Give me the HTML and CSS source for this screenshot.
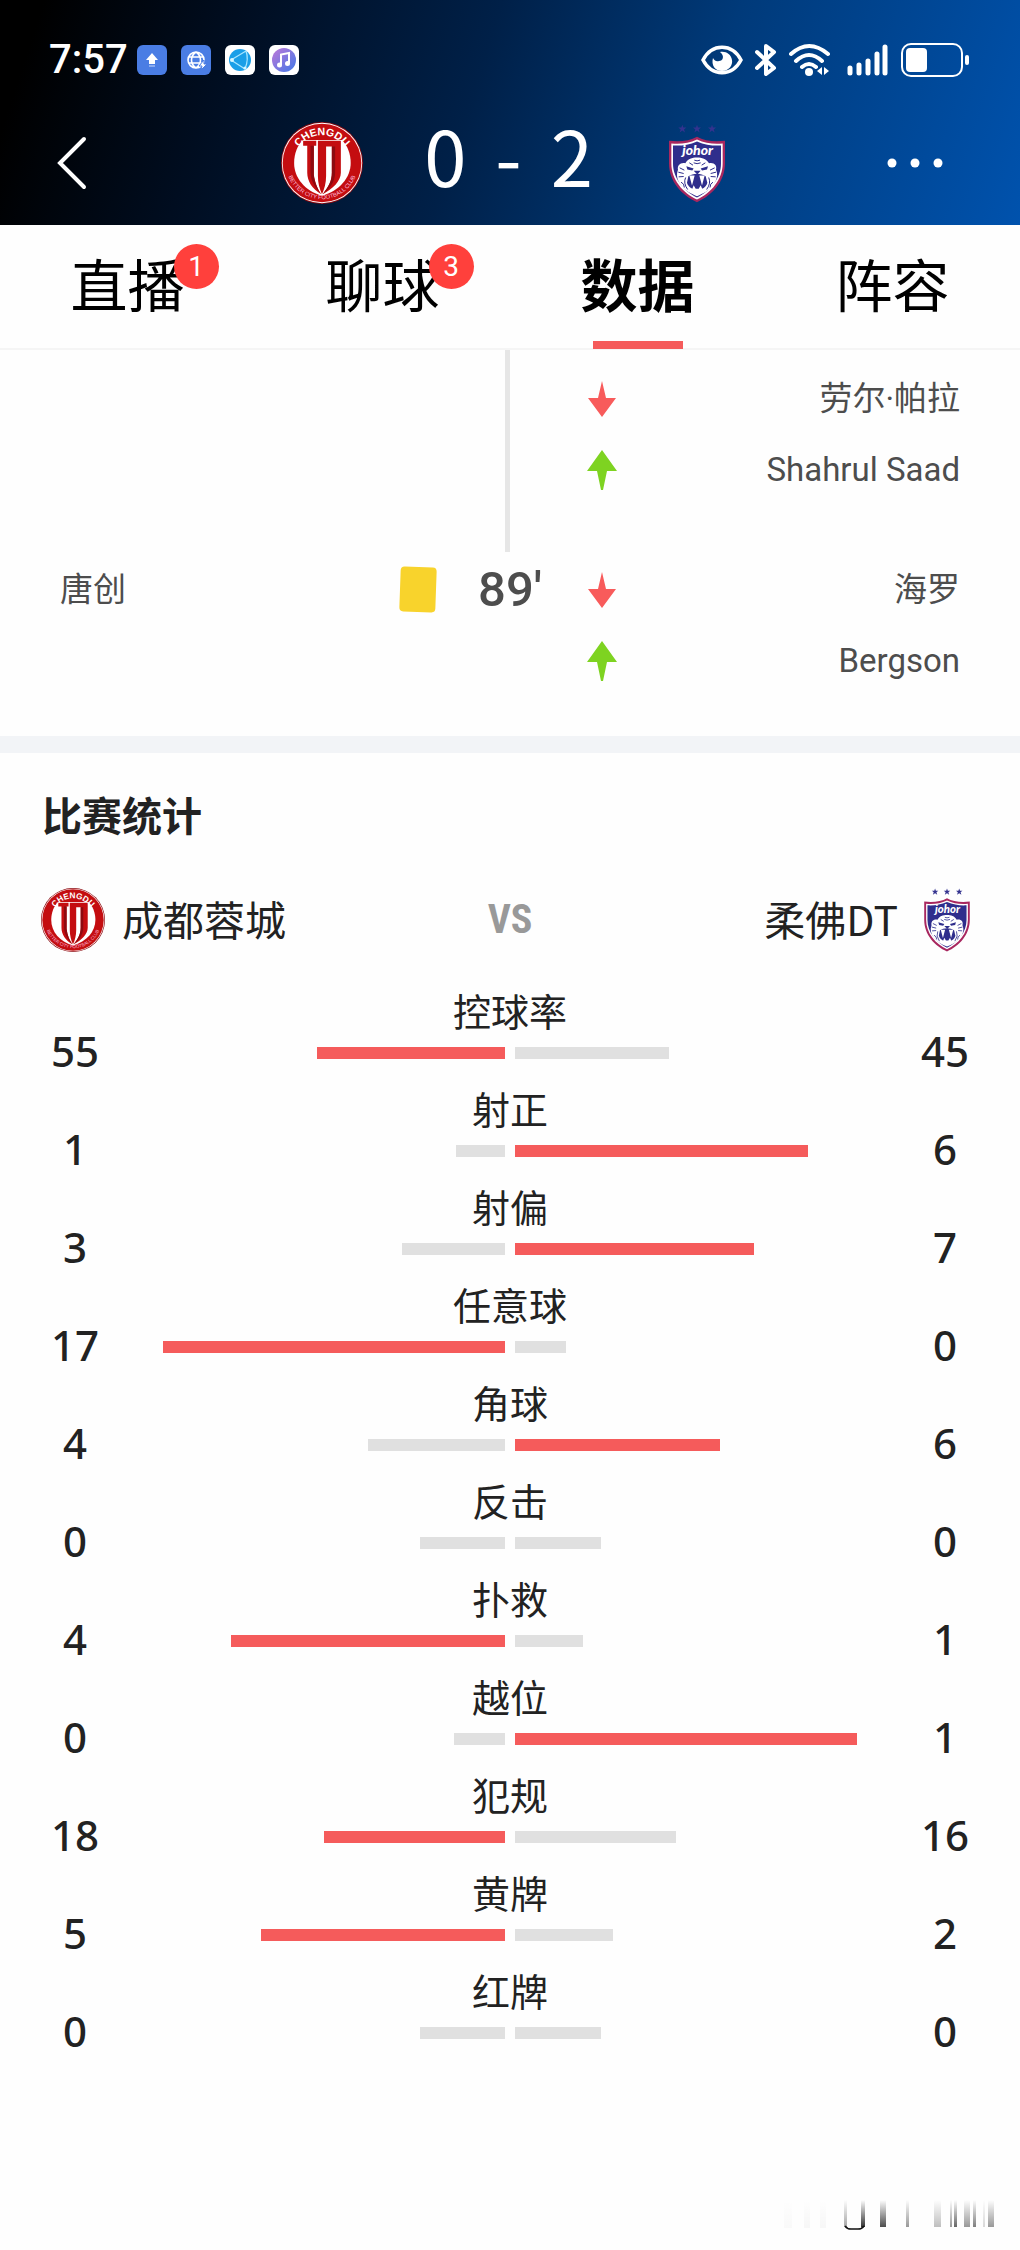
FILE: index.html
```html
<!DOCTYPE html>
<html lang="zh-CN">
<head>
    <meta charset="UTF-8">
    <meta name="viewport" content="width=device-width, initial-scale=1.0">
    <title>比赛数据</title>
    <link rel="stylesheet" href="styles.css">
</head>
<body>
    <!-- 队徽 -->
    <svg class="sprite" aria-hidden="true">
        <symbol id="crest-chengdu" viewBox="0 0 100 100">
            <circle cx="50" cy="50" r="50" fill="#8d0a10"/>
            <circle cx="50" cy="50" r="49" fill="#fff"/>
            <circle cx="50" cy="50" r="48" fill="#c40d10"/>
            <path d="M27 22H74C81 28 85 39 85 50C85 68 71 84 50 90C29 84 16 68 16 50C16 39 20 28 27 22Z" fill="#fff"/>
            <path d="M27 23H43V29H40V64C41 74 45 82 49 88C38 82 32 72 32 62V29H27Z" fill="#c40d10"/>
            <path d="M36 29H40V64C41 74 45 82 49 88C41 80 36 70 36 62Z" fill="#8d0a10"/>
            <path d="M45 23H73V62C73 72 63 82 51 88C58 79 62 72 62 62V30H55V66C55 74 53 82 50 88C47 82 45 74 45 66Z" fill="#c40d10"/>
            <path d="M62 30H66V62C66 73 59 82 51 88C58 79 62 72 62 62Z" fill="#8d0a10"/>
            <path id="arc-top" d="M16 50A34 34 0 0 1 84 50" fill="none"/>
            <path id="arc-bottom" d="M6 50A44 44 0 0 0 94 50" fill="none"/>
            <text class="crest-name"><textPath href="#arc-top" startOffset="50%" text-anchor="middle">CHENGDU</textPath></text>
            <text class="crest-motto"><textPath href="#arc-bottom" startOffset="50%" text-anchor="middle">BETTER CITY FOOTBALL CLUB</textPath></text>
        </symbol>
        <symbol id="crest-johor" viewBox="0 0 180 236">
            <g class="crest-stars">
                <path id="star" d="M46 2L49 10L58 10L51 16L54 25L46 19L38 25L41 16L34 10L43 10Z"/>
                <use href="#star" x="44"/>
                <use href="#star" x="89"/>
            </g>
            <path d="M90 38C112 51 142 53 174 50V118C174 172 135 214 90 234C45 214 6 172 6 118V50C38 53 68 51 90 38Z" fill="#a8275f"/>
            <path d="M90 46C114 58 140 60 167 58V118C167 166 132 207 90 226C48 207 13 166 13 118V58C40 60 66 58 90 46Z" fill="#fff"/>
            <path d="M90 52C114 63 138 65 162 64V118C162 162 130 201 90 220C50 201 18 162 18 118V64C42 65 66 63 90 52Z" fill="#2f2e8c"/>
            <text class="crest-johor-name" x="92" y="93" text-anchor="middle">johor</text>
            <path d="M55 117C62 104 75 100 90 100C105 100 118 104 126 117C142 114 151 124 147 137C154 152 150 169 138 184C127 199 109 208 90 216C71 208 53 199 42 184C30 169 27 152 33 137C30 124 40 114 55 117Z" fill="#fff"/>
            <path d="M64 156C78 146 102 146 116 156L121 176C114 204 68 204 60 176Z" fill="#2f2e8c"/>
            <path d="M67 154L75 184L83 154ZM97 154L105 184L113 154ZM74 199L80 183L86 194H95L101 183L108 199C98 205 84 205 74 199Z" fill="#fff"/>
            <path d="M80 140H101L91 151ZM58 126L80 133L76 139L61 136ZM123 126L101 133L105 139L120 136Z" fill="#2f2e8c"/>
            <path d="M82 108Q90 112 99 108M80 116Q90 121 101 116M67 116L78 123M115 116L104 123M38 131L52 138M34 144L50 148M35 158L50 157M143 131L129 138M147 144L131 148M146 158L131 157M42 174Q52 178 52 190M138 174Q129 178 129 190M56 160Q48 176 62 196M125 160Q133 176 119 196" fill="none" stroke="#2f2e8c" stroke-width="3"/>
        </symbol>
        <symbol id="arrow-down" viewBox="0 0 30 40">
            <path d="M15 2L19 19H29L15 38L1 19H11Z"/>
        </symbol>
        <symbol id="arrow-up" viewBox="0 0 30 40">
            <path d="M15 0L30 21H20L16 40H14L10 21H0Z"/>
        </symbol>
    </svg>

    <header class="header">
        <!-- 状态栏 -->
        <div class="status-bar">
            <span class="clock">7:57</span>
            <div class="status-apps">
                <svg width="30" height="30" viewBox="0 0 30 30">
                    <rect width="30" height="30" rx="6" fill="#4a7de4"/>
                    <path d="M15 8L21 15H18V19H12V15H9Z" fill="#fff"/>
                    <path d="M12 21H18" stroke="#c9dafc" stroke-width="1"/>
                </svg>
                <svg width="30" height="30" viewBox="0 0 30 30">
                    <rect width="30" height="30" rx="6" fill="#4a7de4"/>
                    <path d="M15 7A8 8 0 1 0 15 23A8 8 0 1 0 15 7M15 7C9 11 9 19 15 23C21 19 21 11 15 7M8 12H22M8 18H22" fill="none" stroke="#fff" stroke-width="1.6"/>
                    <path d="M23 15L18 21H21L20 25L26 19H23Z" fill="#fff" stroke="#4a7de4"/>
                </svg>
                <svg width="30" height="30" viewBox="0 0 30 30">
                    <rect width="30" height="30" rx="6" fill="#fff"/>
                    <circle cx="15" cy="15" r="11" fill="#1a9fe8"/>
                    <path d="M6 15L21 6M6 15L20 24M21 6Q24 14 20 24" fill="none" stroke="#a8e6ff" stroke-width="1.3"/>
                    <circle cx="7" cy="15" r="2" fill="#d5f5ff"/>
                    <circle cx="20" cy="23" r="1.6" fill="#d5f5ff"/>
                </svg>
                <svg width="30" height="30" viewBox="0 0 30 30">
                    <defs>
                        <linearGradient id="music" x1="0" y1="0" x2="1" y2="1">
                            <stop offset="0" stop-color="#c078d8"/>
                            <stop offset="1" stop-color="#3f78e8"/>
                        </linearGradient>
                    </defs>
                    <rect width="30" height="30" rx="6" fill="#fff"/>
                    <circle cx="15" cy="15" r="12" fill="url(#music)"/>
                    <path d="M12 20V9.500L20 8V18" fill="none" stroke="#fff" stroke-width="2"/>
                    <circle cx="10.500" cy="20" r="2.500" fill="#fff"/>
                    <circle cx="18.500" cy="18.500" r="2.500" fill="#fff"/>
                </svg>
            </div>
            <div class="status-icons">
                <svg width="42" height="34" viewBox="0 0 42 34">
                    <path d="M2 17C11 0 31 0 40 17C31 34 11 34 2 17Z" fill="none" stroke="#fff" stroke-width="3.500"/>
                    <path d="M12 15C10 22 14 28 21 28C28 28 32 22 31 17C30 11 25 8 19 9C24 13 22 18 18 18C15 19 13 17 12 15Z" fill="#fff"/>
                </svg>
                <svg width="22" height="34" viewBox="0 0 22 34">
                    <path d="M2 9L19 25L11 31V3L19 9L2 25" fill="none" stroke="#fff" stroke-width="4" stroke-linejoin="round" stroke-linecap="round"/>
                </svg>
                <svg width="42" height="34" viewBox="0 0 42 34">
                    <path d="M2 11Q20 -5 39 11M7 18Q20 6 33 18M13 24Q20 18 27 24" fill="none" stroke="#fff" stroke-width="4" stroke-linecap="round"/>
                    <circle cx="20" cy="29" r="4" fill="#fff"/>
                    <path d="M28 28L33 24V32ZM35 24L40 28L35 32Z" fill="#fff"/>
                </svg>
                <svg class="icon-signal" width="42" height="34" viewBox="0 0 42 34">
                    <path d="M3 25V30M12 22V30M21 18V30M30 11V30M38 4V30" stroke="#fff" stroke-width="5" stroke-linecap="round"/>
                </svg>
                <svg width="68" height="34" viewBox="0 0 68 34">
                    <rect x="1" y="1" width="60" height="32" rx="9" fill="none" stroke="#fff" stroke-width="2"/>
                    <rect x="5" y="5" width="21" height="24" rx="4" fill="#fff"/>
                    <rect x="64" y="12" width="4" height="10" rx="2" fill="#fff"/>
                </svg>
            </div>
        </div>

        <!-- 比分 -->
        <div class="match-bar">
            <button type="button" class="back" aria-label="返回">
                <svg width="30" height="54" viewBox="0 0 30 54">
                    <path d="M27 3L3 27L27 51" fill="none" stroke="#fff" stroke-width="4" stroke-linecap="round"/>
                </svg>
            </button>
            <div class="match-score">
                <svg class="crest-large"><use href="#crest-chengdu"/></svg>
                <div class="score">
                    <span>0</span>
                    <span>-</span>
                    <span>2</span>
                </div>
                <svg class="crest-large"><use href="#crest-johor" x="12" y="2" width="60" height="79"/></svg>
            </div>
            <button type="button" class="more" aria-label="更多">
                <svg width="56" height="10" viewBox="0 0 56 10">
                    <circle cx="5" cy="5" r="4.500" fill="#fff"/>
                    <circle cx="28" cy="5" r="4.500" fill="#fff"/>
                    <circle cx="51" cy="5" r="4.500" fill="#fff"/>
                </svg>
            </button>
        </div>
    </header>

    <nav class="tabs">
        <a href="#live" class="tab"><span class="tab-label">直播<span class="badge">1</span></span></a>
        <a href="#chat" class="tab"><span class="tab-label">聊球<span class="badge">3</span></span></a>
        <a href="#stats" class="tab active"><span class="tab-label">数据</span></a>
        <a href="#lineup" class="tab"><span class="tab-label">阵容</span></a>
    </nav>

    <main>
        <!-- 比赛事件 -->
        <section class="timeline">
            <div class="event event-first">
                <div class="event-home"></div>
                <div class="event-line"></div>
                <div class="event-away">
                    <div class="sub">
                        <svg class="arrow arrow-out"><use href="#arrow-down"/></svg>
                        <span>劳尔·帕拉</span>
                    </div>
                    <div class="sub">
                        <svg class="arrow arrow-in"><use href="#arrow-up"/></svg>
                        <span>Shahrul Saad</span>
                    </div>
                </div>
            </div>
            <div class="event">
                <div class="event-home">
                    <span>唐创</span>
                    <span class="yellow-card"></span>
                </div>
                <div class="minute">89′</div>
                <div class="event-away">
                    <div class="sub">
                        <svg class="arrow arrow-out"><use href="#arrow-down"/></svg>
                        <span>海罗</span>
                    </div>
                    <div class="sub">
                        <svg class="arrow arrow-in"><use href="#arrow-up"/></svg>
                        <span>Bergson</span>
                    </div>
                </div>
            </div>
        </section>

        <!-- 比赛统计 -->
        <section class="stats" id="stats">
            <h2>比赛统计</h2>
            <div class="teams">
                <div class="team">
                    <svg class="crest-small"><use href="#crest-chengdu"/></svg>
                    <span>成都蓉城</span>
                </div>
                <span class="vs">VS</span>
                <div class="team team-away">
                    <span>柔佛DT</span>
                    <svg class="crest-small"><use href="#crest-johor"/></svg>
                </div>
            </div>

            <div class="stat">
                <span class="value">55</span>
                <div class="compare">
                    <div class="label">控球率</div>
                    <div class="bars">
                        <div class="side home"><div class="bar win" style="width: 55%"></div></div>
                        <div class="side"><div class="bar" style="width: 45%"></div></div>
                    </div>
                </div>
                <span class="value">45</span>
            </div>
            <div class="stat">
                <span class="value">1</span>
                <div class="compare">
                    <div class="label">射正</div>
                    <div class="bars">
                        <div class="side home"><div class="bar" style="width: 14.3%"></div></div>
                        <div class="side"><div class="bar win" style="width: 85.7%"></div></div>
                    </div>
                </div>
                <span class="value">6</span>
            </div>
            <div class="stat">
                <span class="value">3</span>
                <div class="compare">
                    <div class="label">射偏</div>
                    <div class="bars">
                        <div class="side home"><div class="bar" style="width: 30%"></div></div>
                        <div class="side"><div class="bar win" style="width: 70%"></div></div>
                    </div>
                </div>
                <span class="value">7</span>
            </div>
            <div class="stat">
                <span class="value">17</span>
                <div class="compare">
                    <div class="label">任意球</div>
                    <div class="bars">
                        <div class="side home"><div class="bar win" style="width: 100%"></div></div>
                        <div class="side"><div class="bar" style="width: 15%"></div></div>
                    </div>
                </div>
                <span class="value">0</span>
            </div>
            <div class="stat">
                <span class="value">4</span>
                <div class="compare">
                    <div class="label">角球</div>
                    <div class="bars">
                        <div class="side home"><div class="bar" style="width: 40%"></div></div>
                        <div class="side"><div class="bar win" style="width: 60%"></div></div>
                    </div>
                </div>
                <span class="value">6</span>
            </div>
            <div class="stat">
                <span class="value">0</span>
                <div class="compare">
                    <div class="label">反击</div>
                    <div class="bars">
                        <div class="side home"><div class="bar" style="width: 25%"></div></div>
                        <div class="side"><div class="bar" style="width: 25%"></div></div>
                    </div>
                </div>
                <span class="value">0</span>
            </div>
            <div class="stat">
                <span class="value">4</span>
                <div class="compare">
                    <div class="label">扑救</div>
                    <div class="bars">
                        <div class="side home"><div class="bar win" style="width: 80%"></div></div>
                        <div class="side"><div class="bar" style="width: 20%"></div></div>
                    </div>
                </div>
                <span class="value">1</span>
            </div>
            <div class="stat">
                <span class="value">0</span>
                <div class="compare">
                    <div class="label">越位</div>
                    <div class="bars">
                        <div class="side home"><div class="bar" style="width: 15%"></div></div>
                        <div class="side"><div class="bar win" style="width: 100%"></div></div>
                    </div>
                </div>
                <span class="value">1</span>
            </div>
            <div class="stat">
                <span class="value">18</span>
                <div class="compare">
                    <div class="label">犯规</div>
                    <div class="bars">
                        <div class="side home"><div class="bar win" style="width: 52.9%"></div></div>
                        <div class="side"><div class="bar" style="width: 47.1%"></div></div>
                    </div>
                </div>
                <span class="value">16</span>
            </div>
            <div class="stat">
                <span class="value">5</span>
                <div class="compare">
                    <div class="label">黄牌</div>
                    <div class="bars">
                        <div class="side home"><div class="bar win" style="width: 71.4%"></div></div>
                        <div class="side"><div class="bar" style="width: 28.6%"></div></div>
                    </div>
                </div>
                <span class="value">2</span>
            </div>
            <div class="stat">
                <span class="value">0</span>
                <div class="compare">
                    <div class="label">红牌</div>
                    <div class="bars">
                        <div class="side home"><div class="bar" style="width: 25%"></div></div>
                        <div class="side"><div class="bar" style="width: 25%"></div></div>
                    </div>
                </div>
                <span class="value">0</span>
            </div>
        </section>
    </main>

    <footer class="footer">
        <svg width="220" height="32" viewBox="0 0 220 32" aria-hidden="true">
            <defs>
                <linearGradient id="fade" x1="0" y1="0" x2="0" y2="1">
                    <stop offset="0" stop-color="#000" stop-opacity="0"/>
                    <stop offset="1" stop-color="#000"/>
                </linearGradient>
            </defs>
            <g fill="url(#fade)">
                <rect x="4" y="0" width="8" height="28" opacity="0.02"/>
                <rect x="24" y="0" width="6" height="28" opacity="0.03"/>
                <rect x="40" y="0" width="6" height="28" opacity="0.03"/>
                <rect x="64" y="0" width="3" height="27" opacity="0.35"/>
                <rect x="81" y="0" width="4" height="27" opacity="0.8"/>
                <rect x="100" y="0" width="6" height="27" opacity="0.7"/>
                <rect x="126" y="0" width="3" height="27" opacity="0.4"/>
                <rect x="154" y="0" width="7" height="27" opacity="0.25"/>
                <rect x="170" y="0" width="2" height="27" opacity="0.4"/>
                <rect x="174" y="0" width="3" height="27" opacity="0.6"/>
                <rect x="184" y="0" width="6" height="27" opacity="0.4"/>
                <rect x="193" y="0" width="3" height="27" opacity="0.5"/>
                <rect x="203" y="0" width="2" height="27" opacity="0.15"/>
                <rect x="208" y="0" width="6" height="27" opacity="0.4"/>
            </g>
            <path d="M65 26Q67 29 71 29H78Q82 29 84 26" fill="none" stroke="#111" stroke-width="1.500"/>
        </svg>
    </footer>
</body>
</html>
```

FILE: styles.css
```css
* {
    box-sizing: border-box;
}

body {
    margin: 0;
    background-color: #fefefe;
    color: #222;
    font-family: "Noto Sans CJK SC", "Noto Sans", sans-serif;
}

svg {
    display: block;
    flex: none;
}

button {
    padding: 0;
    border: none;
    background: none;
    cursor: pointer;
}

.sprite {
    position: absolute;
    width: 0;
    height: 0;
}

/* Cabecera */
.header {
    padding-bottom: 11px;
    background: linear-gradient(108deg, #000 4%, #000d20 22%, #002048 46%, #003a7a 68%, #0052ad 100%);
    color: #fff;
}

.status-bar {
    display: flex;
    align-items: center;
    height: 112px;
    padding: 8px 51px 0 49px;
}

.clock {
    font-family: Roboto, sans-serif;
    font-size: 40px;
    line-height: 40px;
    font-weight: 500;
}

.status-apps {
    display: flex;
    gap: 14px;
    margin-left: 9px;
}

.status-icons {
    display: flex;
    align-items: center;
    gap: 12px;
    margin-left: auto;
}

.icon-signal {
    margin-left: 4px;
}

.match-bar {
    display: grid;
    grid-template-columns: 1fr auto 1fr;
    align-items: center;
    height: 102px;
    padding: 0 60px 0 57px;
}

.match-score {
    display: flex;
    align-items: center;
}

.crest-large {
    width: 82px;
    height: 82px;
}

.score {
    display: flex;
    justify-content: center;
    gap: 29px;
    min-width: 292px;
    padding-bottom: 18px;
    font-size: 76px;
    line-height: 78px;
}

.back {
    justify-self: start;
}

.more {
    justify-self: end;
    padding-right: 17px;
}

.crest-name {
    fill: #fff;
    font-family: "Liberation Sans", sans-serif;
    font-size: 13px;
    font-weight: bold;
}

.crest-motto {
    fill: #fbd;
    font-family: "Liberation Sans", sans-serif;
    font-size: 7px;
}

.crest-johor-name {
    fill: #fff;
    font-family: Lato, sans-serif;
    font-size: 42px;
    font-style: italic;
    font-weight: 900;
}

.crest-stars {
    fill: #34338f;
}

/* Tabs */
.tabs {
    display: grid;
    grid-template-columns: repeat(4, 1fr);
    height: 125px;
    border-bottom: 2px solid #f5f5f5;
}

.tab {
    position: relative;
    color: #000;
    font-size: 57px;
    line-height: 114px;
    text-align: center;
    text-decoration: none;
}

.tab-label {
    position: relative;
    display: inline-block;
}

.tab.active {
    font-weight: bold;
}

.tab.active::after {
    content: "";
    position: absolute;
    left: 50%;
    bottom: -1px;
    width: 90px;
    height: 8px;
    margin-left: -45px;
    background-color: #f55b5b;
}

.badge {
    position: absolute;
    top: 19px;
    left: 103px;
    width: 45px;
    height: 45px;
    border-radius: 50%;
    background-color: #ff403c;
    color: #fff;
    font-family: Roboto, sans-serif;
    font-size: 28px;
    line-height: 45px;
}

/* Timeline */
.timeline {
    border-bottom: 17px solid #f2f4f7;
    color: #4d4d4d;
    font-family: Roboto, "Noto Sans CJK SC", sans-serif;
    font-size: 33px;
    line-height: 71px;
}

.event {
    display: grid;
    grid-template-columns: 1fr 80px 1fr;
    padding: 2px 60px 40px;
}

.event-first {
    padding-top: 0;
    padding-bottom: 0;
}

.event-first .event-away {
    padding-top: 13px;
    padding-bottom: 47px;
}

.event-line {
    width: 5px;
    margin-left: 35px;
    background-color: #e6e6e6;
}

.event-home {
    display: flex;
    justify-content: space-between;
    height: 71px;
    align-items: center;
    padding-right: 34px;
}

.event-away {
    padding-left: 37px;
}

.sub {
    display: flex;
    align-items: center;
    justify-content: space-between;
    height: 71px;
}

.arrow {
    width: 30px;
    height: 40px;
}

.arrow-out {
    fill: #f85b5b;
}

.arrow-in {
    fill: #7ed321;
}

.yellow-card {
    width: 36px;
    height: 45px;
    border-radius: 4px;
    background-color: #f8d32c;
    transform: rotate(2deg);
}

.minute {
    font-size: 49px;
    font-weight: 500;
    text-align: center;
}

/* Estadisticas */
.stats {
    padding-top: 31px;
}

.stats h2 {
    margin: 0;
    padding: 0 42px;
    font-size: 40px;
    line-height: 60px;
}

.teams {
    display: grid;
    grid-template-columns: 1fr auto 1fr;
    align-items: center;
    margin: 44px 0 30px;
    padding: 0 41px;
    font-size: 41px;
    line-height: 60px;
}

.team {
    display: flex;
    align-items: center;
    gap: 17px;
}

.team span {
    padding-bottom: 4px;
}

.team-away {
    justify-content: flex-end;
}

.crest-small {
    width: 64px;
    height: 64px;
}

.vs {
    color: #999;
    font-family: "Roboto Condensed", "Liberation Sans Narrow", "Liberation Sans", sans-serif;
    font-size: 40px;
    font-weight: bold;
}

.stat {
    display: grid;
    grid-template-columns: 150px 1fr 150px;
    column-gap: 13px;
    height: 98px;
}

.value {
    align-self: end;
    font-family: "Noto Sans", sans-serif;
    font-size: 42px;
    line-height: 58px;
    font-weight: 500;
    text-align: center;
}

.label {
    font-size: 38px;
    line-height: 56px;
    text-align: center;
}

.bars {
    display: grid;
    grid-template-columns: 1fr 1fr;
    column-gap: 10px;
    margin-top: 9px;
}

.side.home {
    display: flex;
    justify-content: flex-end;
}

.bar {
    height: 12px;
    background-color: #e0e0e0;
}

.bar.win {
    background-color: #f55b5b;
}

.footer {
    display: flex;
    justify-content: flex-end;
    padding: 140px 20px 18px;
}
```
